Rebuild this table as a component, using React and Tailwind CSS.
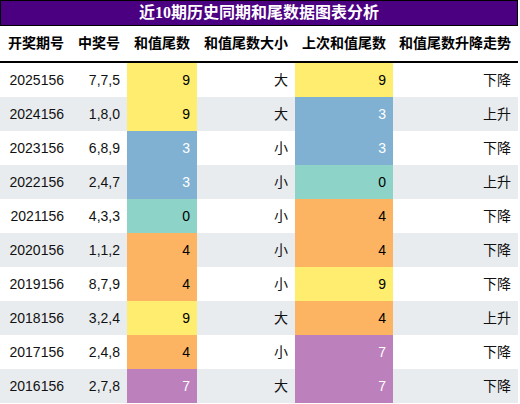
import React from "react";

const COLORS = {
  9: { bg: "bg-[#ffed6f]", fg: "text-black" },
  3: { bg: "bg-[#80b1d3]", fg: "text-white" },
  0: { bg: "bg-[#8dd3c7]", fg: "text-black" },
  4: { bg: "bg-[#fdb462]", fg: "text-black" },
  7: { bg: "bg-[#bc80bd]", fg: "text-white" },
};

const rows = [
  ["2025156", "7,7,5", 9, "大", 9, "下降"],
  ["2024156", "1,8,0", 9, "大", 3, "上升"],
  ["2023156", "6,8,9", 3, "小", 3, "下降"],
  ["2022156", "2,4,7", 3, "小", 0, "上升"],
  ["2021156", "4,3,3", 0, "小", 4, "下降"],
  ["2020156", "1,1,2", 4, "小", 4, "下降"],
  ["2019156", "8,7,9", 4, "小", 9, "下降"],
  ["2018156", "3,2,4", 9, "大", 4, "上升"],
  ["2017156", "2,4,8", 4, "小", 7, "下降"],
  ["2016156", "2,7,8", 7, "大", 7, "下降"],
];

const widths = ["w-[71px]", "w-[56px]", "w-[70px]", "w-[98px]", "w-[98px]", "w-[125px]"];
const headers = ["开奖期号", "中奖号", "和值尾数", "和值尾数大小", "上次和值尾数", "和值尾数升降走势"];

const sans = { fontFamily: '"Liberation Sans", "Noto Sans CJK SC", sans-serif' };

export default function App() {
  return (
    <div className="w-[520px] h-[404px] bg-white overflow-hidden" style={sans}>
      <div className="w-[518px]">
        <div
          className="h-[26px] bg-[#4b0082] border border-black flex items-center justify-center text-white font-bold text-[16px] leading-none"
          style={{ fontFamily: '"Liberation Serif", "Noto Sans CJK SC", serif' }}
        >
          近10期历史同期和尾数据图表分析
        </div>
        <div className="h-[37px] flex border-b-2 border-black">
          {headers.map((h, i) => (
            <div
              key={i}
              className={`${widths[i]} shrink-0 flex items-center justify-end pr-[7px] font-bold text-[14px] text-black`}
            >
              {h}
            </div>
          ))}
        </div>
        {rows.map((r, ri) => {
          const stripe = ri % 2 === 1 ? "bg-[#e9ecef]" : "bg-white";
          const c3 = COLORS[r[2]];
          const c5 = COLORS[r[4]];
          return (
            <div key={ri} className={`h-[34px] flex text-[14px] text-[#111] ${stripe}`}>
              <div className={`${widths[0]} shrink-0 flex items-center justify-end pr-[7px]`}>{r[0]}</div>
              <div className={`${widths[1]} shrink-0 flex items-center justify-end pr-[7px]`}>{r[1]}</div>
              <div className={`${widths[2]} shrink-0 flex items-center justify-end pr-[7px] ${c3.bg} ${c3.fg}`}>{r[2]}</div>
              <div className={`${widths[3]} shrink-0 flex items-center justify-end pr-[7px]`}>{r[3]}</div>
              <div className={`${widths[4]} shrink-0 flex items-center justify-end pr-[7px] ${c5.bg} ${c5.fg}`}>{r[4]}</div>
              <div className={`${widths[5]} shrink-0 flex items-center justify-end pr-[7px]`}>{r[5]}</div>
            </div>
          );
        })}
      </div>
    </div>
  );
}
